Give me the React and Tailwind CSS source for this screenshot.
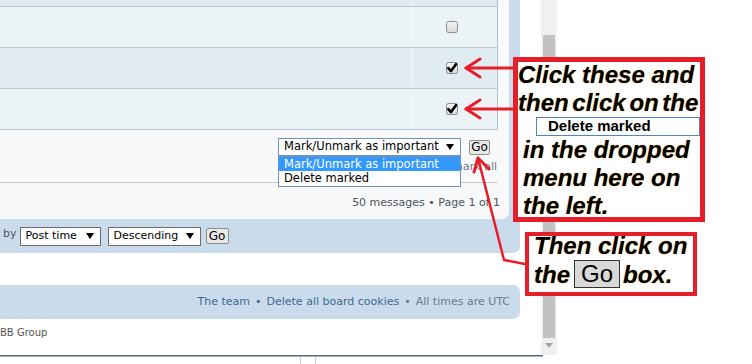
import React from "react";

const font = { fontFamily: '"DejaVu Sans", Verdana, sans-serif' };

function Check({ checked }) {
  return (
    <svg width="12" height="12" viewBox="0 0 12 12">
      <defs>
        <linearGradient id="cbg" x1="0" y1="0" x2="0" y2="1">
          <stop offset="0" stopColor="#f4f4f4" />
          <stop offset="1" stopColor="#d8d8d8" />
        </linearGradient>
      </defs>
      <rect x="0.5" y="0.5" width="11" height="11" rx="2" fill="url(#cbg)" stroke="#8e8e8e" />
      {checked && (
        <path d="M2.3 6.2 L5 9 L10 2.2" fill="none" stroke="#000" strokeWidth="2.6" strokeLinecap="round" strokeLinejoin="round" />
      )}
    </svg>
  );
}

function Row({ bg, h, checked, showBox = true }) {
  return (
    <div className={`flex border-b border-[#bcc6cf] ${bg}`} style={{ height: h }}>
      <div className="w-[412px]" />
      <div className="flex-1 border-l border-[#f4f8fa] flex items-center justify-center pr-[6px]">
        {showBox && <Check checked={checked} />}
      </div>
    </div>
  );
}

function Arrow() {
  return (
    <svg width="8" height="6" viewBox="0 0 8 6" className="shrink-0">
      <path d="M0 0 H8 L4 6 Z" fill="#000" />
    </svg>
  );
}

export default function App() {
  const ann = {
    fontFamily: '"Liberation Sans", Arial, sans-serif',
  };
  return (
    <div className="relative w-[752px] h-[364px] bg-white overflow-hidden" style={font}>
      <div className="flex w-[557px] h-[355px]">
        {/* page content */}
        <div className="w-[541px] flex flex-col">
          <div className="w-[520px] bg-[#cadceb] rounded-br-[7px]">
            <div className="w-[509px] bg-[#f7f9fa] rounded-br-[7px]">
              <div className="w-[498px] border-r border-[#b6c0c9]">
                <Row bg="bg-[#e1ebf2]" h={7} showBox={false} />
                <Row bg="bg-[#ecf3f7]" h={41} checked={false} />
                <Row bg="bg-[#e1ebf2]" h={41} checked={true} />
                <Row bg="bg-[#ecf3f7]" h={41} checked={true} />
              </div>
              {/* controls */}
              <div className="w-[498px] pt-[8px]">
                <div className="flex justify-end items-center pr-[8px] gap-[8px]">
                  <div className="relative">
                    <div className="w-[183px] h-[18px] border border-[#6f93bd] bg-white flex items-center pl-[5px] pr-[6px] text-[11.5px] text-black leading-none">
                      <span className="flex-1">Mark/Unmark as important</span>
                      <Arrow />
                    </div>
                    <div className="absolute left-0 top-[18px] w-[183px] border border-[#6f93bd] bg-white text-[11.5px] leading-[14px] z-10">
                      <div className="bg-[#3399ff] text-white pl-[5px] h-[14px]">Mark/Unmark as important</div>
                      <div className="text-black pl-[5px] h-[15px]">Delete marked</div>
                    </div>
                  </div>
                  <div className="w-[21px] h-[15px] border border-[#8c8c8c] bg-[#e9e9e9] text-[12px] leading-[13px] text-black rounded-[2px] flex justify-center">Go</div>
                </div>
                <div className="flex justify-end pr-[1px] mt-[4px] text-[11px] leading-[14px] text-[#6b7a8c]">
                  Mark all • Unmark all
                </div>
                <div className="h-px bg-[#c3cad1] mt-[8px]" />
                <div className="flex justify-end -mr-[2px] mt-[13px] text-[11px] leading-[14px] text-[#4c5560]">
                  50 messages • Page 1 of 1
                </div>
              </div>
              <div className="h-[9px]" />
            </div>
            {/* sort bar */}
            <div className="h-[34px] flex items-center pl-[3px] text-[11px] text-[#4c5560]">
              <span className="mr-[3px] -mt-[3px]">by</span>
              <div className="w-[81px] h-[19px] border border-[#6b6b6b] bg-white flex items-center pl-[5px] pr-[6px] text-[11px] text-black">
                <span className="flex-1">Post time</span>
                <Arrow />
              </div>
              <div className="ml-[7px] w-[93px] h-[19px] border border-[#6b6b6b] bg-white flex items-center pl-[5px] pr-[6px] text-[11px] text-black">
                <span className="flex-1">Descending</span>
                <Arrow />
              </div>
              <div className="ml-[5px] w-[23px] h-[16px] border border-[#8c8c8c] bg-[#e9e9e9] text-[12px] leading-[14px] text-black rounded-[2px] flex justify-center">Go</div>
            </div>
          </div>
          <div className="h-[32px]" />
          <div className="w-[520px] h-[34px] bg-[#cadceb] rounded-r-[7px] flex items-center justify-end pr-[10px] text-[11px]">
            <span className="text-[#3c6a92]">The team</span>
            <span className="text-[#3c6a92] mx-[5px]">•</span>
            <span className="text-[#3c6a92]">Delete all board cookies</span>
            <span className="text-[#6b7a8c] mx-[5px]">•</span>
            <span className="text-[#6b7a8c]">All times are UTC</span>
          </div>
          <div className="h-[26px] flex items-center text-[10px] text-[#555]">BB Group</div>
        </div>
        {/* scrollbar */}
        <div className="w-[16px] h-[355px] bg-[#f0f0f0] flex flex-col items-center">
          <div className="h-[35px]" />
          <div className="w-[12px] h-[303px] bg-[#c1c1c1]" />
          <div className="mt-[5px]">
            <svg width="8" height="5" viewBox="0 0 8 5"><path d="M0 0 H8 L4 5 Z" fill="#a3a3a3" /></svg>
          </div>
        </div>
      </div>
      <div className="w-[543px] h-[1px] bg-[#5b6874]" />
      <div className="w-[543px] h-[1px] bg-[#aab3bb]" />
      <div className="flex">
        <div className="w-[300px]" />
        <div className="w-px h-[7px] bg-[#c8c8c8]" />
        <div className="w-[14px]" />
        <div className="w-px h-[7px] bg-[#c8c8c8]" />
      </div>

      {/* annotation box 1 */}
      <div className="absolute left-[513px] top-[57px] w-[192px] h-[165px] border-[5px] border-[#e61e2a] bg-white text-black overflow-hidden" style={ann}>
        <div className="-mt-[1px] text-[24px] leading-[28px] font-bold italic [text-shadow:0_0_1px_#d4901e] whitespace-nowrap">
          <div>Click these and</div>
          <div className="[word-spacing:-3px]">then click on the</div>
        </div>
        <div className="ml-[18px] h-[19px] border border-[#4a86c8] bg-white flex items-center pl-[11px] text-[15px] font-bold not-italic">Delete marked</div>
        <div className="text-[24px] leading-[28px] font-bold italic [text-shadow:0_0_1px_#d4901e] whitespace-nowrap pl-[5px]">
          <div>in the dropped</div>
          <div>menu here on</div>
          <div>the left.</div>
        </div>
      </div>

      {/* annotation box 2 */}
      <div className="absolute left-[525px] top-[232px] w-[172px] h-[64px] border-[4px] border-[#e61e2a] bg-white text-black overflow-hidden" style={ann}>
        <div className="-mt-[4px] pl-[5px] text-[24px] leading-[28px] font-bold italic [text-shadow:0_0_1px_#d4901e] whitespace-nowrap">
          <div>Then click on</div>
          <div className="flex items-end">
            <span>the</span>
            <span className="ml-[4px] mb-[1px] w-[46px] h-[28px] border border-[#333] bg-[#d9d9d9] flex items-center justify-center font-normal not-italic [text-shadow:none] text-[24px] leading-none">Go</span>
            <span className="ml-[3px]">box.</span>
          </div>
        </div>
      </div>

      {/* arrows */}
      <svg className="absolute left-0 top-0 pointer-events-none" width="752" height="364" viewBox="0 0 752 364">
        <g fill="none" stroke="#e61e2a" strokeWidth="3" strokeLinecap="round" strokeLinejoin="round">
          <path d="M513 68 H466" />
          <path d="M480 59 L466 68 L480 77" />
          <path d="M513 109 H466" />
          <path d="M480 100 L466 109 L480 118" />
          <path d="M478 158 L504 260 L525 264" strokeWidth="2.5" />
          <path d="M474 172 L478 158 L489 169" />
        </g>
      </svg>
    </div>
  );
}
